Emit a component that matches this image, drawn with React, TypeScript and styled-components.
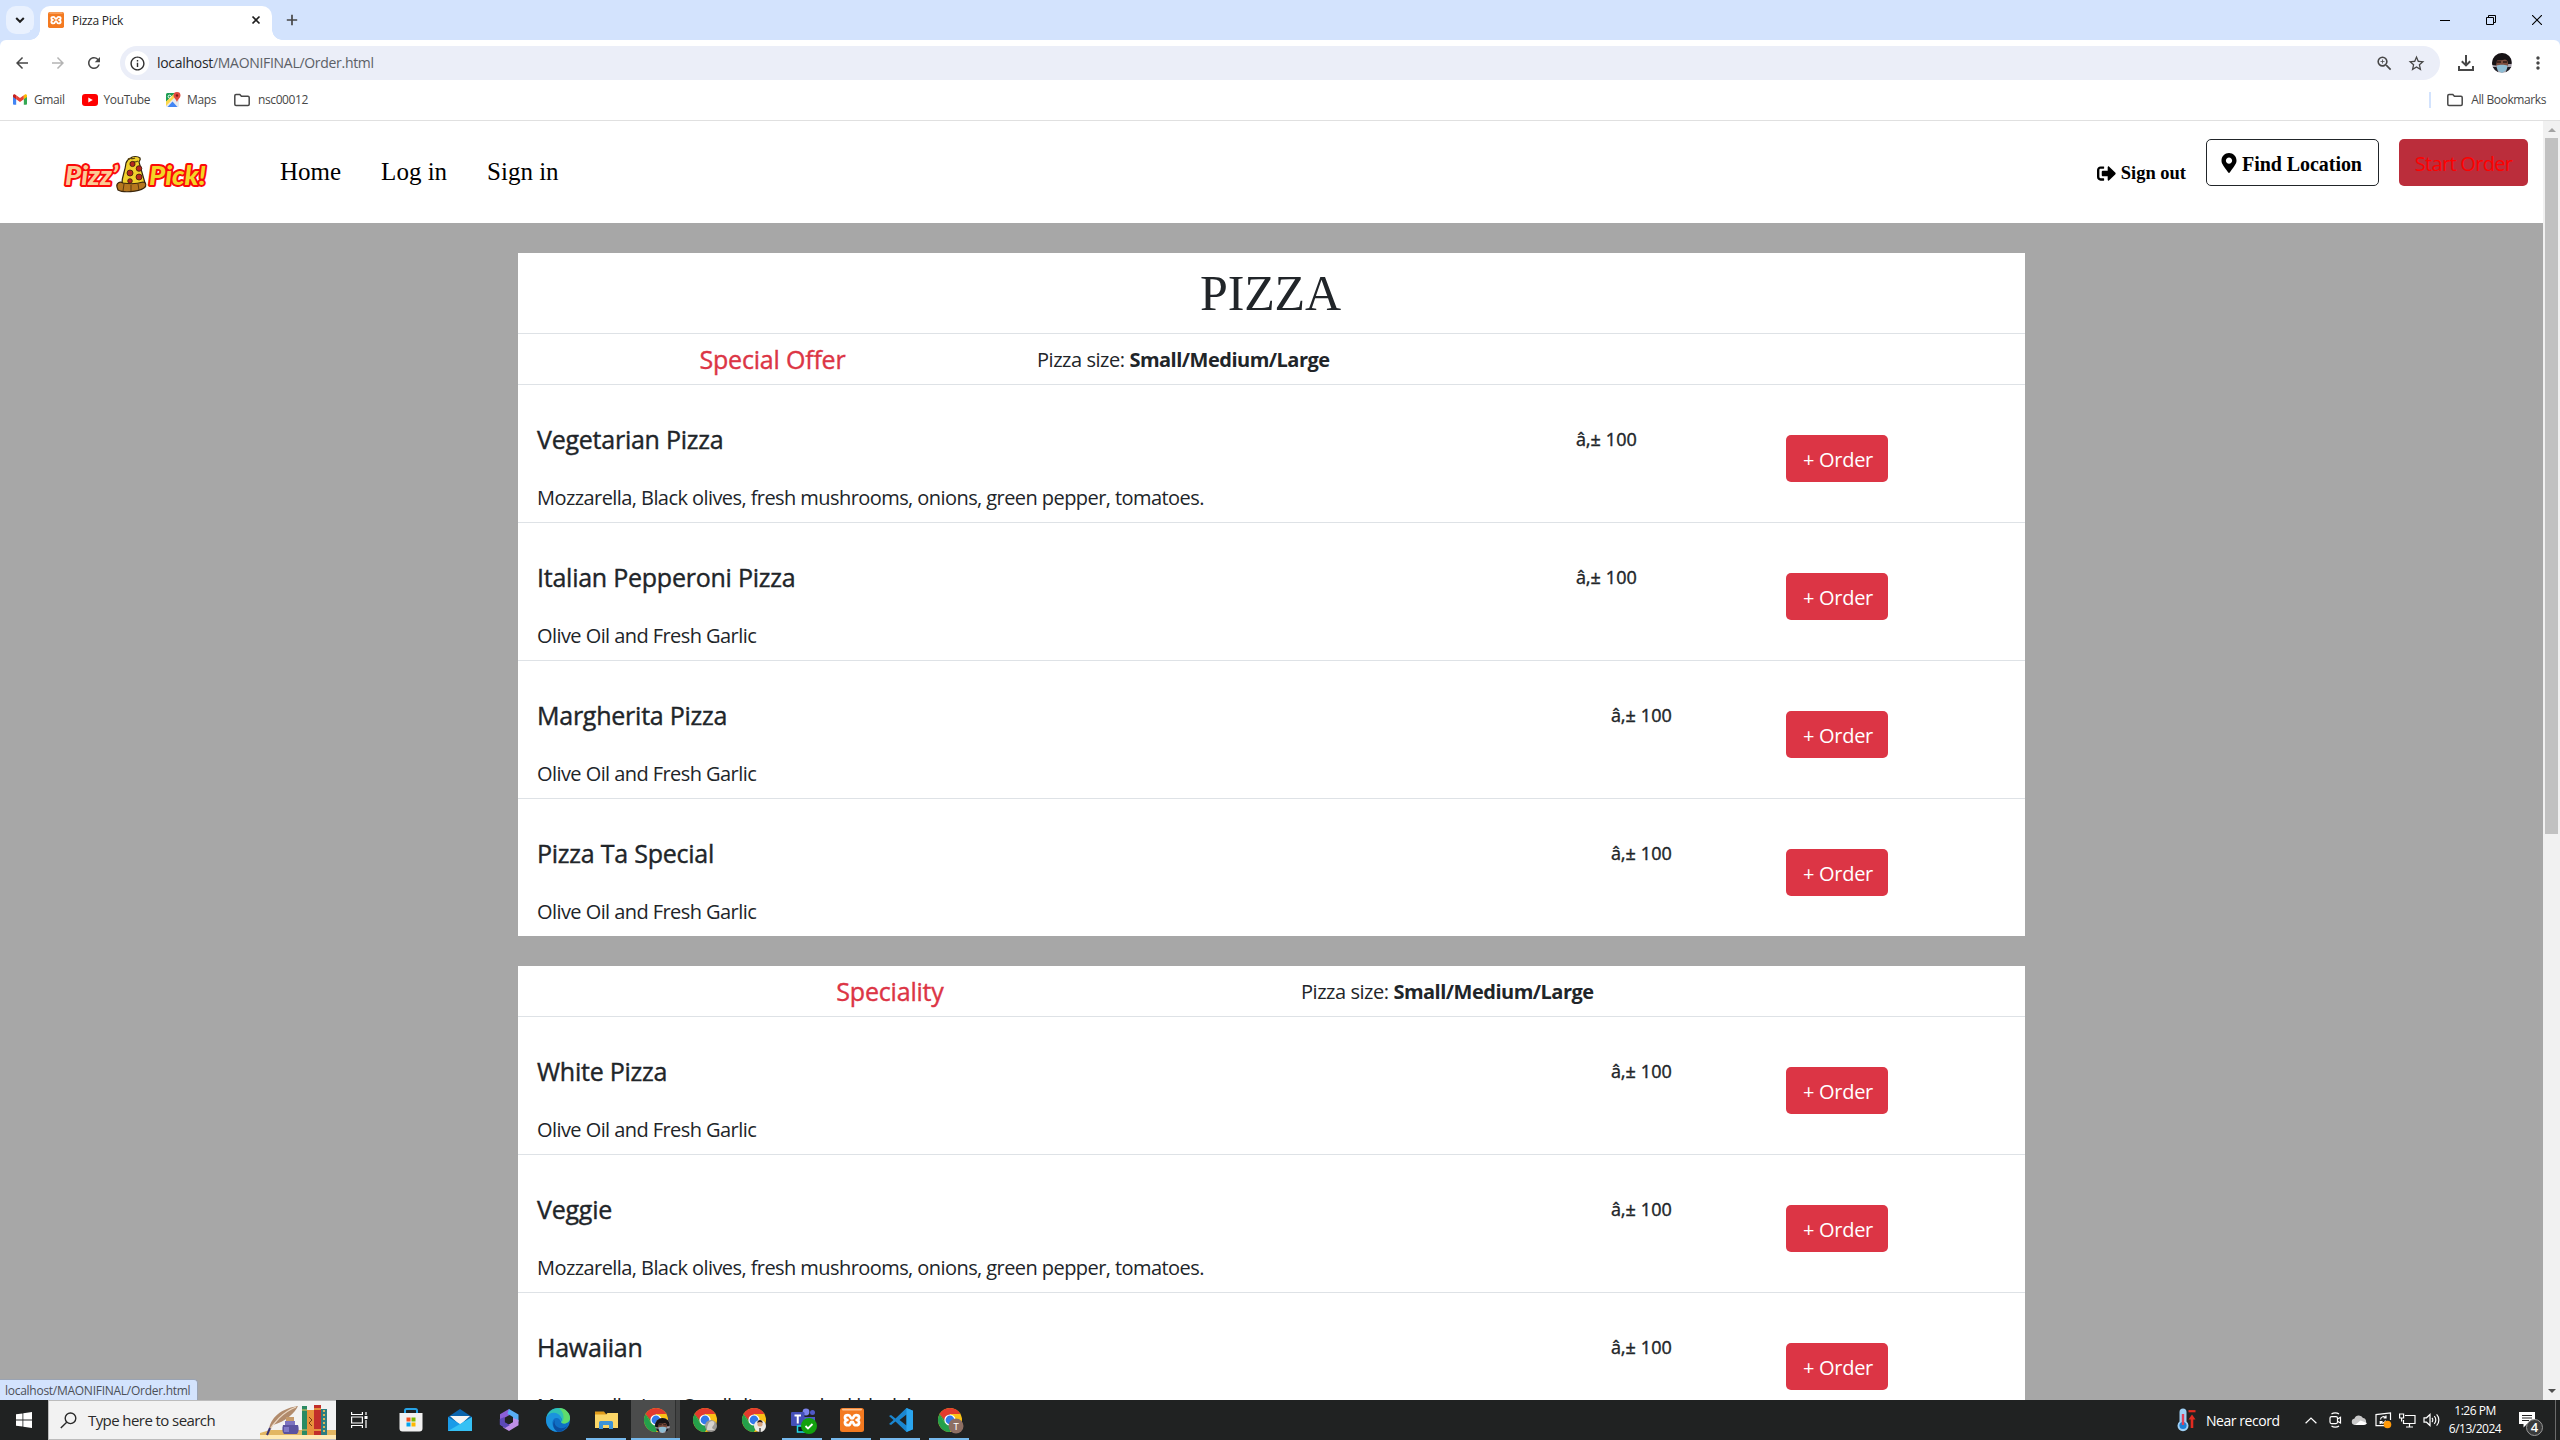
import React from 'react';
import styled, { createGlobalStyle, css } from 'styled-components';
import {
  MdArrowBack,
  MdArrowForward,
  MdRefresh,
  MdStarBorder,
  MdZoomIn,
  MdMoreVert,
  MdInfoOutline,
} from 'react-icons/md';
import { FaSignOutAlt, FaMapMarkerAlt } from 'react-icons/fa';

const ui = `'Segoe UI', 'Open Sans', 'Noto Sans', sans-serif`;
const serif = `'Times New Roman', 'Liberation Serif', serif`;

const GlobalStyle = createGlobalStyle`
  *, *::before, *::after { box-sizing: border-box; }
  html, body { margin: 0; padding: 0; overflow: hidden; }
  svg { display: block; flex: none; }
`;

const Screen = styled.div`
  width: 2560px;
  height: 1440px;
  display: flex;
  flex-direction: column;
  overflow: hidden;
  background: #fff;
  font-family: ${ui};
  color: #212529;
`;

/* ---------- browser chrome ---------- */

const TabStrip = styled.div`
  height: 40px;
  flex: none;
  display: flex;
  align-items: flex-start;
  padding: 6px 0 0 6px;
  background: #d3e3fd;
`;

const TabSearch = styled.div`
  width: 28px;
  height: 28px;
  border-radius: 10px;
  background: #e9f1fe;
  display: flex;
  align-items: center;
  justify-content: center;
`;

const Tab = styled.div`
  position: relative;
  width: 232px;
  height: 34px;
  margin-left: 6px;
  padding: 0 11px 6px 8px;
  border-radius: 10px 10px 0 0;
  background: #fff;
  display: flex;
  align-items: center;
  &::before,
  &::after {
    content: '';
    position: absolute;
    bottom: 0;
    width: 10px;
    height: 10px;
  }
  &::before {
    left: -10px;
    background: radial-gradient(circle at 0 0, #d3e3fd 9.5px, #fff 10px);
  }
  &::after {
    right: -10px;
    background: radial-gradient(circle at 100% 0, #d3e3fd 9.5px, #fff 10px);
  }
`;

const TabTitle = styled.span`
  flex: 1;
  margin: 1px 0 0 8px;
  font-size: 12px;
  line-height: 16px;
  letter-spacing: -0.25px;
  color: #1f1f1f;
`;

const NewTab = styled.div`
  width: 28px;
  height: 28px;
  margin-left: 6px;
  display: flex;
  align-items: center;
  justify-content: center;
`;

const WindowButtons = styled.div`
  margin-left: auto;
  height: 28px;
  display: flex;
`;

const WindowButton = styled.div`
  width: 46px;
  display: flex;
  align-items: center;
  justify-content: center;
`;

const StripCorner = styled.div`
  flex: none;
  height: 6px;
  background: #d3e3fd;
  &::before {
    content: '';
    display: block;
    height: 6px;
    border-radius: 6px 6px 0 0;
    background: #fff;
  }
`;

const Toolbar = styled.div`
  height: 34px;
  flex: none;
  display: flex;
  align-items: center;
  padding: 0 4px 0 4px;
  color: #474747;
`;

const ToolButton = styled.div<{ $w?: number; $faded?: boolean }>`
  width: ${(p) => p.$w ?? 36}px;
  height: 34px;
  display: flex;
  align-items: center;
  justify-content: center;
  color: ${(p) => (p.$faded ? '#b4b4b4' : '#474747')};
`;

const Omnibox = styled.div`
  flex: 1;
  height: 34px;
  margin: 0 8px;
  padding: 0 8px 0 5px;
  border-radius: 17px;
  background: #ebeef8;
  display: flex;
  align-items: center;
`;

const SiteInfo = styled.div`
  width: 24px;
  height: 24px;
  border-radius: 12px;
  background: #fff;
  color: #303030;
  display: flex;
  align-items: center;
  justify-content: center;
`;

const Url = styled.span`
  flex: 1;
  margin-left: 8px;
  font-size: 14px;
  line-height: 20px;
  letter-spacing: -0.3px;
  color: #5c6066;
  b {
    font-weight: 400;
    color: #26282b;
  }
`;

const BookmarksBar = styled.div`
  height: 41px;
  flex: none;
  display: flex;
  align-items: center;
  padding: 0 14px 1px 13px;
  border-bottom: 1px solid #e0e0e0;
`;

const Bookmark = styled.div<{ $gap: number; $after: number }>`
  display: flex;
  align-items: center;
  gap: ${(p) => p.$gap}px;
  margin-right: ${(p) => p.$after}px;
  font-size: 12px;
  line-height: 16px;
  letter-spacing: -0.4px;
  color: #474747;
  white-space: nowrap;
`;

const AllBookmarks = styled(Bookmark)`
  margin-left: auto;
  padding-left: 16px;
  border-left: 2px solid #d3e3fd;
`;

/* ---------- page ---------- */

const Viewport = styled.div`
  flex: 1;
  min-height: 0;
  display: flex;
`;

const Page = styled.div`
  flex: 1;
  min-width: 0;
  overflow: hidden;
  display: flex;
  flex-direction: column;
  background: #a7a7a7;
`;

const Navbar = styled.header`
  height: 102px;
  flex: none;
  display: flex;
  align-items: flex-start;
  padding: 0 15px 0 60px;
  background: #fff;
  font-family: ${serif};
`;

const LogoBox = styled.div`
  width: 150px;
  margin-top: 30px;
`;

const NavLinks = styled.nav`
  display: flex;
  gap: 40px;
  margin: 37px auto 0 70px;
`;

const NavLink = styled.a`
  font-size: 25px;
  line-height: 28px;
  color: #000;
`;

const SignOut = styled.a`
  display: flex;
  align-items: center;
  gap: 5px;
  margin: 41px 20px 0 0;
  font-size: 18.5px;
  font-weight: 700;
  line-height: 22px;
  color: #000;
`;

const button = css`
  height: 47px;
  border-radius: 5px;
  display: flex;
  align-items: center;
  font-size: 20px;
  line-height: 30px;
  white-space: nowrap;
`;

const FindLocation = styled.button`
  ${button}
  width: 173px;
  margin: 18px 20px 0 0;
  padding: 0 0 0 12px;
  gap: 3px;
  border: 1px solid #212529;
  background: #fff;
  color: #000;
  font-family: ${serif};
  font-weight: 700;
  span {
    margin-top: 2px;
    letter-spacing: -0.05px;
  }
`;

const StartOrder = styled.button`
  ${button}
  width: 129px;
  margin-top: 18px;
  padding: 2px 0 0;
  justify-content: center;
  border: 0;
  background: #bb2d3b;
  color: #f00;
  font-family: ${ui};
  letter-spacing: -0.7px;
`;

const Main = styled.main`
  flex: 1;
  min-height: 0;
  display: flex;
  flex-direction: column;
  gap: 30px;
  padding: 30px 518px 0;
`;

const Card = styled.section`
  flex: none;
  background: #fff;
`;

const CardTitle = styled.h1`
  margin: 0;
  height: 81px;
  padding-right: 2px;
  border-bottom: 1px solid #dee2e6;
  font-family: ${serif};
  font-size: 50px;
  font-weight: 400;
  line-height: 81px;
  letter-spacing: -0.1px;
  text-align: center;
`;

const SectionHead = styled.div<{ $first: number; $inset: number }>`
  height: 51px;
  border-bottom: 1px solid #dee2e6;
  display: grid;
  grid-template-columns: ${(p) => p.$first - p.$inset}px 1fr;
  column-gap: ${(p) => p.$inset}px;
  align-items: center;
`;

const SectionName = styled.h2`
  margin: 0;
  font-size: 25px;
  font-weight: 500;
  line-height: 30px;
  letter-spacing: -0.2px;
  -webkit-text-stroke: 0.4px currentColor;
  text-align: center;
  color: #dc3545;
`;

const SizeNote = styled.span`
  padding-top: 2px;
  font-size: 20px;
  line-height: 30px;
  letter-spacing: -0.45px;
  b {
    font-weight: 700;
    letter-spacing: -0.5px;
  }
`;

const Row = styled.div`
  height: 138px;
  display: grid;
  grid-template-columns: 1fr 210px 239px;
  padding-left: 19px;
  border-bottom: 1px solid #dee2e6;
  &:last-child {
    height: 137px;
    border-bottom: 0;
  }
`;

const Details = styled.div`
  padding-top: 39px;
`;

const PizzaName = styled.h3`
  margin: 0 0 29px;
  font-size: 25px;
  font-weight: 500;
  line-height: 30px;
  letter-spacing: -0.24px;
  -webkit-text-stroke: 0.4px currentColor;
`;

const Toppings = styled.p`
  margin: 0;
  font-size: 20px;
  line-height: 30px;
  letter-spacing: -0.57px;
  white-space: nowrap;
`;

const Price = styled.span<{ $indent: number }>`
  padding: 42px 0 0 ${(p) => p.$indent}px;
  font-size: 18px;
  font-weight: 500;
  line-height: 24px;
  letter-spacing: 0.1px;
  -webkit-text-stroke: 0.4px currentColor;
`;

const OrderButton = styled.button`
  ${button}
  width: 102px;
  margin: 50px 0 0;
  padding: 3px 0 0 2px;
  justify-content: center;
  border: 0;
  background: #dc3545;
  color: #fff;
  font-family: ${ui};
  letter-spacing: -0.3px;
`;

const Scrollbar = styled.div`
  width: 17px;
  flex: none;
  display: flex;
  flex-direction: column;
  align-items: center;
  background: #f1f1f1;
`;

const ScrollArrow = styled.div<{ $down?: boolean }>`
  width: 0;
  height: 0;
  margin: ${(p) => (p.$down ? 'auto 0 7px' : '7px 0 6px')};
  border: 4px solid transparent;
  ${(p) =>
    p.$down
      ? css`
          border-top-color: #505050;
          border-bottom: 0;
        `
      : css`
          border-bottom-color: #a3a3a3;
          border-top: 0;
        `}
`;

const ScrollThumb = styled.div`
  width: 13px;
  height: 696px;
  background: #c1c1c1;
`;

const StatusBubble = styled.div`
  position: absolute;
  left: 0;
  top: 1379px;
  width: 198px;
  height: 21px;
  padding: 0 0 0 5px;
  background: #d3e3fd;
  border: solid #9aa3b2;
  border-width: 1px 1px 0 0;
  border-radius: 0 4px 0 0;
  font-size: 12px;
  line-height: 21px;
  letter-spacing: -0.27px;
  color: #4c5057;
`;

/* ---------- taskbar ---------- */

const Taskbar = styled.footer`
  height: 40px;
  flex: none;
  display: flex;
  background: #202222;
  color: #fff;
`;

const StartButton = styled.div`
  width: 48px;
  display: flex;
  align-items: center;
  justify-content: center;
`;

const SearchBox = styled.div`
  width: 288px;
  display: flex;
  align-items: center;
  padding-left: 11px;
  background: #f2f2f2;
  border: 1px solid #bcbcbc;
  border-right: 0;
  color: #2a2a2a;
  font-size: 15px;
  line-height: 20px;
  letter-spacing: -0.58px;
  span {
    flex: 1;
    margin-left: 11px;
    white-space: nowrap;
  }
`;

const TaskItem = styled.div<{ $w?: number; $after?: number; $running?: boolean; $active?: boolean }>`
  width: ${(p) => p.$w ?? 49}px;
  margin-right: ${(p) => p.$after ?? 0}px;
  display: flex;
  align-items: center;
  justify-content: center;
  position: relative;
  ${(p) =>
    p.$active &&
    css`
      background: linear-gradient(90deg, #4b4c4c 44px, #2e2f2f 44px, #2e2f2f 45px, #434444 45px);
    `}
  ${(p) =>
    p.$running &&
    css`
      &::after {
        content: '';
        position: absolute;
        left: ${p.$active ? 0 : 4}px;
        right: ${p.$active ? 0 : 5}px;
        bottom: 0;
        height: 2px;
        background: #76b9ed;
      }
    `}
`;

const Tray = styled.div`
  margin-left: auto;
  display: flex;
  align-items: center;
`;

const Weather = styled.div`
  display: flex;
  align-items: center;
  gap: 9px;
  width: 122px;
  font-size: 14px;
  letter-spacing: -0.45px;
  white-space: nowrap;
`;

const TrayIcon = styled.div`
  width: 24px;
  display: flex;
  justify-content: center;
`;

const Clock = styled.div`
  width: 64px;
  display: flex;
  flex-direction: column;
  align-items: center;
  font-size: 12px;
  line-height: 18px;
  letter-spacing: -0.5px;
`;

const Notifications = styled.div`
  position: relative;
  width: 48px;
  height: 40px;
  padding: 12px 0 0 12px;
`;

const Badge = styled.span`
  position: absolute;
  left: 19px;
  top: 19px;
  width: 17px;
  height: 17px;
  border: 1px solid #9a9a9a;
  border-radius: 9px;
  background: #3a3b3b;
  font-size: 13px;
  font-weight: 600;
  line-height: 15px;
  text-align: center;
`;

const ShowDesktop = styled.div`
  width: 5px;
  height: 40px;
  border-left: 1px solid #6b6b6b;
`;

/* ---------- drawings ---------- */

const Xampp = ({ size }: { size: number }) => (
  <svg width={size} height={size} viewBox="0 0 24 24">
    <rect width="24" height="24" rx="2.5" fill="#f47a20" />
    <rect x="2" y="0.8" width="20" height="1.6" rx=".8" fill="#fbc08d" />
    <path
      d="M8 7.2c-4 0-4 4.2-.6 4.8-3.400.6-3.400 5.200.6 5.200 3.400 0 1.600-3.400 4-3.400s.6 3.400 4 3.400c4 0 4-4.600.6-5.200 3.400-.6 3.400-4.800-.6-4.800-3.400 0-1.600 3.200-4 3.200s-.6-3.200-4-3.200z"
      fill="none"
      stroke="#fff"
      strokeWidth="2.7"
      strokeLinejoin="round"
    />
  </svg>
);

const Folder = ({ w = 16 }: { w?: number }) => (
  <svg width={w} height="14" viewBox="0 0 16 14">
    <path
      d="M2 1.500h3.800l1.600 1.800h6.600a1.200 1.200 0 0 1 1.200 1.200v6.800a1.200 1.200 0 0 1-1.200 1.200H2A1.200 1.200 0 0 1 .8 11.300V2.700A1.200 1.200 0 0 1 2 1.500z"
      fill="none"
      stroke="#474747"
      strokeWidth="1.5"
    />
  </svg>
);

const Gmail = () => (
  <svg width="14" height="11" viewBox="0 0 15 11">
    <path d="M0 1.500V10a1 1 0 0 0 1 1h2.400V4.200z" fill="#4285f4" />
    <path d="M15 1.500V10a1 1 0 0 1-1 1h-2.400V4.200z" fill="#34a853" />
    <path d="M3.400 1v4.200l4.100 3 4.100-3V1L7.500 4z" fill="#ea4335" />
    <path d="M0 1.500C0 .1 1.500-.5 2.600.4l.8.6v4.200L0 2.800z" fill="#c5221f" />
    <path d="M15 1.500C15 .1 13.500-.5 12.400.4l-.8.6v4.200L15 2.800z" fill="#fbbc04" />
  </svg>
);

const YouTube = () => (
  <svg width="16" height="12" viewBox="0 0 16 12">
    <rect width="16" height="12" rx="3" fill="#f00" />
    <path d="M6.300 3.400v5.200L10.800 6z" fill="#fff" />
  </svg>
);

const Maps = () => (
  <svg width="15" height="15" viewBox="0 0 15 15">
    <rect y="1" width="13" height="14" rx="1.500" fill="#e8eaed" />
    <path d="M0 2.500A1.500 1.500 0 0 1 1.500 1H9L0 10z" fill="#1e9e55" />
    <path d="M0 9.500 8 2l1.500 2.500L0 14z" fill="#fdd74b" />
    <path d="M1.500 15 6.500 9.500l5 5.500z" fill="#4285f4" />
    <circle cx="3.600" cy="4.600" r="1.500" fill="none" stroke="#fff" />
    <path d="M11 0a3.500 3.500 0 0 1 3.500 3.600C14.500 6 11.500 7.500 11 10.500 10.500 7.500 7.500 6 7.500 3.600A3.500 3.500 0 0 1 11 0z" fill="#e04a3f" />
    <circle cx="11" cy="3.500" r="1.200" fill="#7c1d16" />
  </svg>
);

const MaskedFace = ({ size }: { size: number }) => (
  <svg width={size} height={size} viewBox="0 0 20 20">
    <clipPath id="face">
      <circle cx="10" cy="10" r="10" />
    </clipPath>
    <g clipPath="url(#face)">
      <rect width="20" height="20" fill="#a9a3ad" />
      <ellipse cx="10" cy="9" rx="6.600" ry="8" fill="#7d4d3e" />
      <path d="M0 12C-1 2 4-1 10-1s11 3 9.500 12L16 11c0-3-1-4-3-4.500-3 1-6 .5-8 1l-1 5z" fill="#171315" />
      <path d="M5 9h4M11 9h4" stroke="#2b1815" strokeWidth="1.400" />
      <path d="M4.500 12.500c3-1 8-1 11 0l-.5 4L10 20l-5-3z" fill="#8fbdd4" />
      <path d="M0 20v-6l4.500 0 2 6zM20 20v-6l-4.500 0-2 6z" fill="#1d1b22" />
    </g>
  </svg>
);

const Logo = () => (
  <svg width="150" height="42" viewBox="0 0 150 42">
    <g
      fontFamily="Lato, sans-serif"
      fontWeight="900"
      fontStyle="italic"
      fontSize="26"
      strokeLinejoin="round"
      paintOrder="stroke"
      stroke="#fb0a0a"
      strokeWidth="3.800"
    >
      <text x="5" y="34" textLength="53" lengthAdjust="spacingAndGlyphs" fill="#fbcb95">
        Pizz’
      </text>
      <text x="89" y="34" textLength="57" lengthAdjust="spacingAndGlyphs" fill="#f3d526">
        Pick!
      </text>
    </g>
    <path d="M66 12c1-3 2-4 5-5 1-2 7-2 9 0 1 2-1 3-1 4l6 21c-6 3-17 3-23 0 0-7 3-11 4-20z" fill="#f0d02c" stroke="#332611" strokeWidth="1.200" />
    <path d="M68 8c3-2 4 1 7-1M70 12c3-2 5 0 8-2" fill="none" stroke="#5c4511" strokeWidth="1.300" />
    <g fill="#b5261d" stroke="#3a1a0c" strokeWidth=".8">
      <circle cx="72.500" cy="13" r="2.600" />
      <circle cx="79" cy="17.500" r="2.800" />
      <circle cx="70" cy="22" r="3" />
      <circle cx="79" cy="26" r="3" />
      <circle cx="70" cy="30" r="2.300" />
    </g>
    <path d="M57 36c-1-4 3-6 6-4 6 1 14 1 20-1 3 0 4 4 1 6-6 4-21 5-26 2z" fill="#b6771f" stroke="#3b260c" strokeWidth="1.200" />
    <path d="M64 33l-1 7M71 34v6M78 33l1 6" stroke="#5d3a10" strokeWidth="1" />
  </svg>
);

const SearchArt = () => (
  <svg width="77" height="38" viewBox="0 0 77 38">
    <path d="M1 32l10-3h66v9H1z" fill="#e2b662" />
    <path d="M1 34h76v4H1z" fill="#ffe9b3" />
    <path d="M10 30c0-9 8-22 29-25-3 7-13 16-25 19l-3 6z" fill="#b18b6c" />
    <path d="M9 32C14 22 24 11 37 6" fill="none" stroke="#ecd9c4" strokeWidth="1.300" />
    <path d="M8 34l3-7" stroke="#3a3372" strokeWidth="2" />
    <path d="M24 24h15c1 3 1 7-1 9H25c-2-2-2-6-1-9z" fill="#5b53a0" />
    <path d="M26 20h10v4H26z" fill="#7c73c0" />
    <path d="M27 16h8v4h-8z" fill="#c59a6a" />
    <path d="M25 26h5v5h-5z" fill="#8079c8" />
    <rect x="43" y="5" width="5" height="29" fill="#2a8a63" />
    <path d="M43 9h5M43 29h5" stroke="#efc35c" />
    <rect x="48" y="9" width="7" height="25" fill="#e8923d" />
    <path d="M50 16l3 3-3 3 3 3" fill="none" stroke="#7a3b12" />
    <rect x="55" y="4" width="7" height="30" fill="#c22e2b" />
    <path d="M55 8h7M55 29h7" stroke="#f0b347" strokeWidth="1.500" />
    <rect x="62" y="8" width="6" height="26" fill="#2c7c80" />
    <path d="M65 9v24" stroke="#d9b85c" strokeWidth="2" strokeDasharray="2 2" />
  </svg>
);

const WinLogo = () => (
  <svg width="16" height="16" viewBox="0 0 16 16" fill="#fff">
    <path d="M0 2.300 6.500 1.400v6.200H0zM7.300 1.300 16 0v7.600H7.300zM0 8.400h6.500v6.200L0 13.700zM7.300 8.400H16V16l-8.700-1.300z" />
  </svg>
);

const TaskView = () => (
  <svg width="17" height="16" viewBox="0 0 17 16" fill="none" stroke="#fff" strokeWidth="1.200">
    <path d="M.6 0v2.500h10.800V0M.6 16v-2.500h10.800V16M.6 5h10.800v6H.6zM15 0v3M15 8v8" />
    <rect x="13.500" y="4" width="3" height="3" fill="#fff" stroke="none" />
  </svg>
);

const Store = () => (
  <svg width="24" height="24" viewBox="0 0 24 24">
    <path d="M6 6V2.500A1.500 1.500 0 0 1 7.500 1h9A1.500 1.500 0 0 1 18 2.500V6" fill="none" stroke="#27a3e6" strokeWidth="2" />
    <path d="M.5 5h23v15.500a3 3 0 0 1-3 3h-17a3 3 0 0 1-3-3z" fill="#f1f1f1" />
    <path d="M7.500 9.500h4v4h-4z" fill="#f25022" />
    <path d="M12.500 9.500h4v4h-4z" fill="#7fba00" />
    <path d="M7.500 14.500h4v4h-4z" fill="#00a4ef" />
    <path d="M12.500 14.500h4v4h-4z" fill="#ffb900" />
  </svg>
);

const Mail = () => (
  <svg width="24" height="24" viewBox="0 0 24 24">
    <path d="M0 9 12 1l12 8v14H0z" fill="#0a64ad" />
    <path d="M2 8h20l-10 9z" fill="#f5f5f5" />
    <path d="M0 9l24 14H0z" fill="#1a9be8" />
    <path d="M24 9v14H0z" fill="#35c1f5" />
  </svg>
);

const Microsoft365 = () => (
  <svg width="20" height="22" viewBox="0 0 20 22">
    <path d="M10 0 1 5.200v10.300l4.500 2.800V8.800L12.500 5 10 0z" fill="#8c5fd8" />
    <path d="M10 0l9.500 5.500v7.300L14 9.800V8L8.500 4.800z" fill="#58aef5" />
    <path d="M19.500 11v5.200L10 22l-6-3.500 10-5.500V9z" fill="#c08fe8" />
    <path d="M.8 10v5.700L6 19l5-3-5.500-3V8z" fill="#5c49b8" />
    <path d="M10 7.300l3.600 2v4L10 15.300l-3.600-2v-4z" fill="#202222" />
  </svg>
);

const Edge = () => (
  <svg width="24" height="24" viewBox="0 0 24 24">
    <circle cx="12" cy="12" r="12" fill="#0f6fc5" />
    <path d="M.3 10C1.500 4 6.500 0 12 0c7 0 12 5 12 10 0 3-2.500 5.500-6 5.500-2 0-3.500-1-3-2 1.500-2 .5-5.500-3.500-5.500C6.500 8 2 8 .3 10z" fill="#2fc2b5" />
    <path d="M13 0c6.500 0 11 5 11 10 0 3-2.500 5.500-6 5.500-1 0-2-.3-2.500-.8C19 11 18 4 13 0z" fill="#5fdc6c" />
    <path d="M.3 10C2 5 8 3.500 12 6c3 2 4 5 2.500 7.500C14 11 12 9.500 10 10c-5 1-5 9 1.500 13.800C4 24-1 17 .3 10z" fill="#1b93dd" />
    <path d="M9 12c-2 4 2 9 8 8 2-.3 3.500-1.200 4.800-2.500 0 0-3.800 6.500-10.300 6.300C7 21 6 15 9 12z" fill="#0b4fa0" />
  </svg>
);

const Explorer = () => (
  <svg width="23" height="20" viewBox="0 0 23 20">
    <path d="M0 1.500h9l2 2.500v4H0z" fill="#e09b1a" />
    <path d="M0 4.500h11L12.500 3H23v15H0z" fill="#fbd667" />
    <path d="M4 19v-6.500A1.500 1.500 0 0 1 5.500 11h11a1.500 1.500 0 0 1 1.500 1.500V19h-4v-4H8v4z" fill="#3c93d8" />
  </svg>
);

const Chrome = ({ children }: { children?: React.ReactNode }) => (
  <svg width="28" height="28" viewBox="-2 -2 28 28">
    <circle cx="12" cy="12" r="12" fill="#fbc116" />
    <path d="M1.600 6A12 12 0 0 0 12 24l5.200-9L12 12 6.800 15z" fill="#24a04b" />
    <path d="M1.600 6 6.800 15 12 12V6z" fill="#24a04b" />
    <path d="M12 6h10.400A12 12 0 0 0 1.600 6L6.500 12z" fill="#e33b2e" />
    <circle cx="12" cy="12" r="5.600" fill="#fff" />
    <circle cx="12" cy="12" r="4.400" fill="#3379ea" />
    {children}
  </svg>
);

const Teams = () => (
  <svg width="28" height="28" viewBox="0 0 28 28">
    <circle cx="17" cy="6" r="3.400" fill="#7b83eb" />
    <circle cx="23.500" cy="6.500" r="2.500" fill="#5059c9" />
    <path d="M13 11h13v7a5 5 0 0 1-5 5h-8z" fill="#5059c9" />
    <rect x="2" y="6" width="13.500" height="14" rx="1.200" fill="#444fb8" />
    <path d="M5.500 9.500H12M8.750 9.500v8" stroke="#fff" strokeWidth="2" />
    <path d="M8.500 20h8v6h-8z" fill="#101820" stroke="#23d7e8" strokeWidth="1.500" />
    <circle cx="20" cy="20" r="8" fill="#13a10e" />
    <path d="m16.500 20 2.500 2.500 4.500-4.500" fill="none" stroke="#fff" strokeWidth="1.800" />
  </svg>
);

const VsCode = () => (
  <svg width="24" height="24" viewBox="0 0 24 24">
    <path d="M17.500 0 24 2.800v18.400L17.500 24 6.500 13.500 2 17 0 16l4.500-4L0 8l2-1 4.500 3.500zm0 6.500L10.500 12l7 5.500z" fill="#1a86cf" fillRule="evenodd" />
    <path d="M17.500 0 24 2.800v18.400L17.500 24z" fill="#2aa5ee" />
  </svg>
);

const Thermometer = () => (
  <svg width="20" height="24" viewBox="0 0 20 24">
    <path d="M2.500 4a3.500 3.500 0 0 1 7 0v9.500a5.500 5.500 0 1 1-7 0z" fill="#9fd0f5" />
    <circle cx="6" cy="17.500" r="3.600" fill="#1c7fd6" />
    <path d="M6 6v11" stroke="#e0405a" strokeWidth="2.400" />
    <path d="M11.500 3.200h7" stroke="#e02b20" strokeWidth="2.200" />
    <path d="M15 6.500l3.500 5h-2.200V20h-2.600v-8.500h-2.200z" fill="#e02b20" />
  </svg>
);

/* ---------- data ---------- */

interface Pizza {
  name: string;
  toppings: string;
  indent: number;
}

const garlic = 'Olive Oil and Fresh Garlic';
const veggies = 'Mozzarella, Black olives, fresh mushrooms, onions, green pepper, tomatoes.';

const specials: Pizza[] = [
  { name: 'Vegetarian Pizza', toppings: veggies, indent: 0 },
  { name: 'Italian Pepperoni Pizza', toppings: garlic, indent: 0 },
  { name: 'Margherita Pizza', toppings: garlic, indent: 35 },
  { name: 'Pizza Ta Special', toppings: garlic, indent: 35 },
];

const speciality: Pizza[] = [
  { name: 'White Pizza', toppings: garlic, indent: 35 },
  { name: 'Veggie', toppings: veggies, indent: 35 },
  { name: 'Hawaiian', toppings: 'Mozzarella, Jam, Small dice, smoked black ham', indent: 35 },
];

const PizzaRows = ({ items }: { items: Pizza[] }) => (
  <>
    {items.map((p) => (
      <Row key={p.name}>
        <Details>
          <PizzaName>{p.name}</PizzaName>
          <Toppings>{p.toppings}</Toppings>
        </Details>
        <Price $indent={p.indent}>â‚± 100</Price>
        <OrderButton>+ Order</OrderButton>
      </Row>
    ))}
  </>
);

export default function App() {
  return (
    <Screen>
      <GlobalStyle />
      <TabStrip>
        <TabSearch>
          <svg width="10" height="8" viewBox="0 0 10 8">
            <path d="m1.200 2 3.800 3.800L8.800 2" fill="none" stroke="#1f1f1f" strokeWidth="2" />
          </svg>
        </TabSearch>
        <Tab>
          <Xampp size={16} />
          <TabTitle>Pizza Pick</TabTitle>
          <svg width="10" height="10" viewBox="0 0 10 10">
            <path d="m1.500 1.500 7 7m0-7-7 7" stroke="#1f1f1f" strokeWidth="1.700" />
          </svg>
        </Tab>
        <NewTab>
          <svg width="12" height="12" viewBox="0 0 12 12">
            <path d="M6 .8v10.400M.8 6h10.400" stroke="#474747" strokeWidth="1.700" />
          </svg>
        </NewTab>
        <WindowButtons>
          <WindowButton>
            <svg width="10" height="10" viewBox="0 0 10 10">
              <path d="M0 5.500h10" stroke="#000" />
            </svg>
          </WindowButton>
          <WindowButton>
            <svg width="10" height="10" viewBox="0 0 10 10" fill="none" stroke="#000">
              <path d="M.5 2.500h7v7h-7zM2.500 2.500v-2h7v7h-2" />
            </svg>
          </WindowButton>
          <WindowButton>
            <svg width="10" height="10" viewBox="0 0 10 10">
              <path d="m0 0 10 10M10 0 0 10" stroke="#000" strokeWidth="1.100" />
            </svg>
          </WindowButton>
        </WindowButtons>
      </TabStrip>
      <StripCorner />
      <Toolbar>
        <ToolButton>
          <MdArrowBack size={18} />
        </ToolButton>
        <ToolButton $faded>
          <MdArrowForward size={18} />
        </ToolButton>
        <ToolButton>
          <MdRefresh size={18} />
        </ToolButton>
        <Omnibox>
          <SiteInfo>
            <MdInfoOutline size={17} />
          </SiteInfo>
          <Url>
            <b>localhost</b>/MAONIFINAL/Order.html
          </Url>
          <ToolButton $w={32}>
            <MdZoomIn size={19} />
          </ToolButton>
          <ToolButton $w={32}>
            <MdStarBorder size={19} />
          </ToolButton>
        </Omnibox>
        <ToolButton>
          <svg width="16" height="16" viewBox="0 0 16 16" fill="none" stroke="#474747" strokeWidth="2">
            <path d="M8 0v10M3.800 6.200 8 10.400l4.200-4.200M1 11v4h14v-4" />
          </svg>
        </ToolButton>
        <ToolButton>
          <MaskedFace size={20} />
        </ToolButton>
        <ToolButton>
          <MdMoreVert size={20} />
        </ToolButton>
      </Toolbar>
      <BookmarksBar>
        <Bookmark $gap={7} $after={17}>
          <Gmail />
          Gmail
        </Bookmark>
        <Bookmark $gap={6} $after={16}>
          <YouTube />
          YouTube
        </Bookmark>
        <Bookmark $gap={6} $after={18}>
          <Maps />
          Maps
        </Bookmark>
        <Bookmark $gap={8} $after={0}>
          <Folder />
          nsc00012
        </Bookmark>
        <AllBookmarks $gap={8} $after={0}>
          <Folder />
          All Bookmarks
        </AllBookmarks>
      </BookmarksBar>

      <Viewport>
        <Page>
          <Navbar>
            <LogoBox>
              <Logo />
            </LogoBox>
            <NavLinks>
              <NavLink>Home</NavLink>
              <NavLink>Log in</NavLink>
              <NavLink>Sign in</NavLink>
            </NavLinks>
            <SignOut>
              <FaSignOutAlt size={19} />
              Sign out
            </SignOut>
            <FindLocation>
              <FaMapMarkerAlt size={20} />
              <span>Find Location</span>
            </FindLocation>
            <StartOrder>Start Order</StartOrder>
          </Navbar>
          <Main>
            <Card>
              <CardTitle>PIZZA</CardTitle>
              <SectionHead $first={519} $inset={10}>
                <SectionName>Special Offer</SectionName>
                <SizeNote>
                  Pizza size: <b>Small/Medium/Large</b>
                </SizeNote>
              </SectionHead>
              <PizzaRows items={specials} />
            </Card>
            <Card>
              <SectionHead $first={783} $inset={39}>
                <SectionName>Speciality</SectionName>
                <SizeNote>
                  Pizza size: <b>Small/Medium/Large</b>
                </SizeNote>
              </SectionHead>
              <PizzaRows items={speciality} />
            </Card>
          </Main>
        </Page>
        <Scrollbar>
          <ScrollArrow />
          <ScrollThumb />
          <ScrollArrow $down />
        </Scrollbar>
      </Viewport>
      <StatusBubble>localhost/MAONIFINAL/Order.html</StatusBubble>

      <Taskbar>
        <StartButton>
          <WinLogo />
        </StartButton>
        <SearchBox>
          <svg width="17" height="17" viewBox="0 0 17 17" fill="none" stroke="#2a2a2a" strokeWidth="1.400">
            <circle cx="10.500" cy="6.300" r="5.300" />
            <path d="M6.700 10.200.8 16" />
          </svg>
          <span>Type here to search</span>
          <SearchArt />
        </SearchBox>
        <TaskItem $w={47} $after={3}>
          <TaskView />
        </TaskItem>
        <TaskItem>
          <Store />
        </TaskItem>
        <TaskItem>
          <Mail />
        </TaskItem>
        <TaskItem>
          <Microsoft365 />
        </TaskItem>
        <TaskItem>
          <Edge />
        </TaskItem>
        <TaskItem $running>
          <Explorer />
        </TaskItem>
        <TaskItem $running $active>
          <Chrome>
            <svg x="11" y="10" width="15" height="15">
              <MaskedFace size={15} />
            </svg>
          </Chrome>
        </TaskItem>
        <TaskItem>
          <Chrome>
            <circle cx="18" cy="18" r="6" fill="#9c9a96" />
            <path d="M14 22c0-5 2-9 5-9s3 3 1 5 0 3 2 4z" fill="#d6d3ce" />
          </Chrome>
        </TaskItem>
        <TaskItem>
          <Chrome>
            <circle cx="18" cy="18" r="6" fill="#eceae6" />
            <circle cx="18" cy="16" r="2.600" fill="#d9a47e" />
            <path d="M15.300 15c0-4 5.400-4 5.400 0-1.500-1.500-4-1.500-5.400 0z" fill="#2b1a14" />
            <path d="M18 20v4" stroke="#222" strokeWidth="1.200" />
          </Chrome>
        </TaskItem>
        <TaskItem $running>
          <Teams />
        </TaskItem>
        <TaskItem $running>
          <Xampp size={24} />
        </TaskItem>
        <TaskItem $running>
          <VsCode />
        </TaskItem>
        <TaskItem $running>
          <Chrome>
            <circle cx="18" cy="18" r="7.500" fill="#8d6e63" />
            <text x="18" y="21.500" fontSize="9.500" fontFamily="Roboto, sans-serif" fill="#fff" textAnchor="middle">
              T
            </text>
          </Chrome>
        </TaskItem>

        <Tray>
          <Weather>
            <Thermometer />
            Near record
          </Weather>
          <TrayIcon>
            <svg width="12" height="7" viewBox="0 0 12 7">
              <path d="m.6 6.300 5.400-5.300 5.400 5.300" fill="none" stroke="#fff" strokeWidth="1.200" />
            </svg>
          </TrayIcon>
          <TrayIcon>
            <svg width="13" height="16" viewBox="0 0 13 16" fill="none" stroke="#fff" strokeWidth="1.200">
              <rect x="1" y="4.600" width="7.500" height="7" rx="1.500" />
              <path d="m8.500 7 3-1.700v5.600l-3-1.700M2.500 2c2-1.500 5.500-1.500 7.500 0M2.500 14c2 1.500 5.500 1.500 7.500 0" />
            </svg>
          </TrayIcon>
          <TrayIcon>
            <svg width="16" height="10" viewBox="0 0 16 10">
              <path d="M3.500 10a3.300 3.300 0 0 1 0-6.500A4.600 4.600 0 0 1 12 3a3.600 3.600 0 0 1 .6 7z" fill="#c9c9c9" />
              <path d="M4 10 9.500 5.500 16 8c-.5 1.300-1.600 2-3.400 2z" fill="#fff" />
            </svg>
          </TrayIcon>
          <TrayIcon>
            <svg width="17" height="17" viewBox="0 0 17 17" fill="none" stroke="#fff" strokeWidth="1.200">
              <path d="M15.500 8V1L1 2.600v11h8" />
              <path d="M5.500 7.500a3 3 0 0 1 5.500-1.500M11 3.600V6H8.600M10.500 8.500A3 3 0 0 1 5.300 10M5.200 12v-2.300h2.400" />
              <circle cx="12.500" cy="12.500" r="3.800" fill="#ff9a0a" stroke="none" />
            </svg>
          </TrayIcon>
          <TrayIcon>
            <svg width="17" height="15" viewBox="0 0 17 15" fill="none" stroke="#fff" strokeWidth="1.200">
              <path d="M6 2.500h10v8H4.500V7M10.500 10.500V14M7 14h7M.6 1h4v4h-4zM2.600 5v3.500" />
            </svg>
          </TrayIcon>
          <TrayIcon>
            <svg width="17" height="14" viewBox="0 0 17 14" fill="none" stroke="#fff" strokeWidth="1.200">
              <path d="M1 4.800h2.500L7 1.500v11L3.500 9.200H1zM9 5c1 1 1 3 0 4M11.300 3.200c2 2 2 5.600 0 7.600M13.600 1.300c3 3 3 8.400 0 11.400" />
            </svg>
          </TrayIcon>
          <Clock>
            <span>1:26 PM</span>
            <span>6/13/2024</span>
          </Clock>
          <Notifications>
            <svg width="16" height="16" viewBox="0 0 16 16">
              <path d="M0 0h16v12H8l-3.500 3.500V12H0z" fill="#fff" />
              <path d="M3 3.500h10M3 6h10M3 8.500h7" stroke="#222" />
            </svg>
            <Badge>4</Badge>
          </Notifications>
          <ShowDesktop />
        </Tray>
      </Taskbar>
    </Screen>
  );
}
